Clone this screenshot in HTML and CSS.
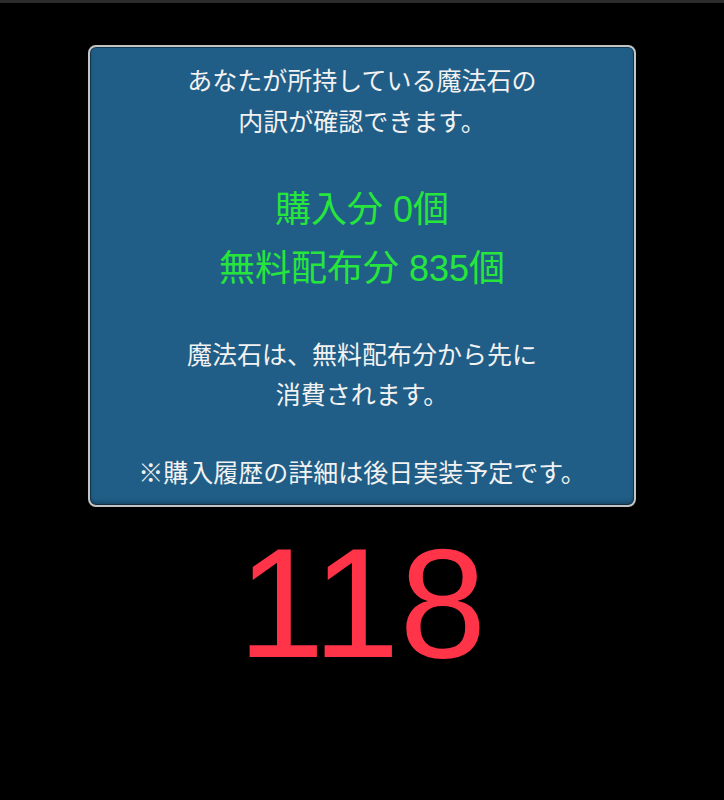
FILE: index.html
```html
<!DOCTYPE html>
<html lang="ja">
<head>
<meta charset="utf-8">
<link rel="stylesheet" href="styles.css">
</head>
<body>
<div class="topbar"></div>
<main class="page">
  <section class="panel">
    <p class="intro">あなたが所持している魔法石の<br>内訳が確認できます。</p>
    <p class="counts">購入分 0個<br>無料配布分 835個</p>
    <p class="note first">魔法石は、無料配布分から先に<br>消費されます。</p>
    <p class="note">※購入履歴の詳細は後日実装予定です。</p>
  </section>
  <div class="big">118</div>
</main>
</body>
</html>
```
FILE: styles.css
```css
html, body {
  margin: 0;
  padding: 0;
  background: #000;
}
body {
  width: 724px;
  height: 800px;
  overflow: hidden;
  font-family: "Noto Sans CJK JP", "Noto Sans", sans-serif;
}
.topbar {
  height: 3px;
  background: #2b2b2b;
}
.page {
  display: flex;
  flex-direction: column;
  align-items: center;
  padding-top: 42px;
}
.panel {
  box-sizing: border-box;
  width: 548px;
  border: 2px solid #c4c4c4;
  border-radius: 8px;
  background: #205e87;
  box-shadow: inset 0 0 0 1px rgba(0, 0, 0, 0.35), inset 0 -3px 4px rgba(0, 0, 0, 0.25);
  padding: 12px 0 14px;
  text-align: center;
  color: #f2f2f2;
}
.panel p {
  margin: 0;
}
.intro {
  font-size: 25px;
  line-height: 41px;
}
.panel .counts {
  margin-top: 39px;
  font-family: "Liberation Sans", "Noto Sans CJK JP", sans-serif;
  font-size: 36px;
  line-height: 59px;
  color: #26e63c;
}
.panel .note {
  margin-top: 38px;
  font-size: 25px;
  line-height: 40px;
}
.panel .note.first {
  margin-top: 35px;
}
.big {
  margin-top: 18px;
  font-family: "Liberation Sans", Arial, sans-serif;
  font-size: 156px;
  line-height: 156px;
  color: #ff3449;
}
```
